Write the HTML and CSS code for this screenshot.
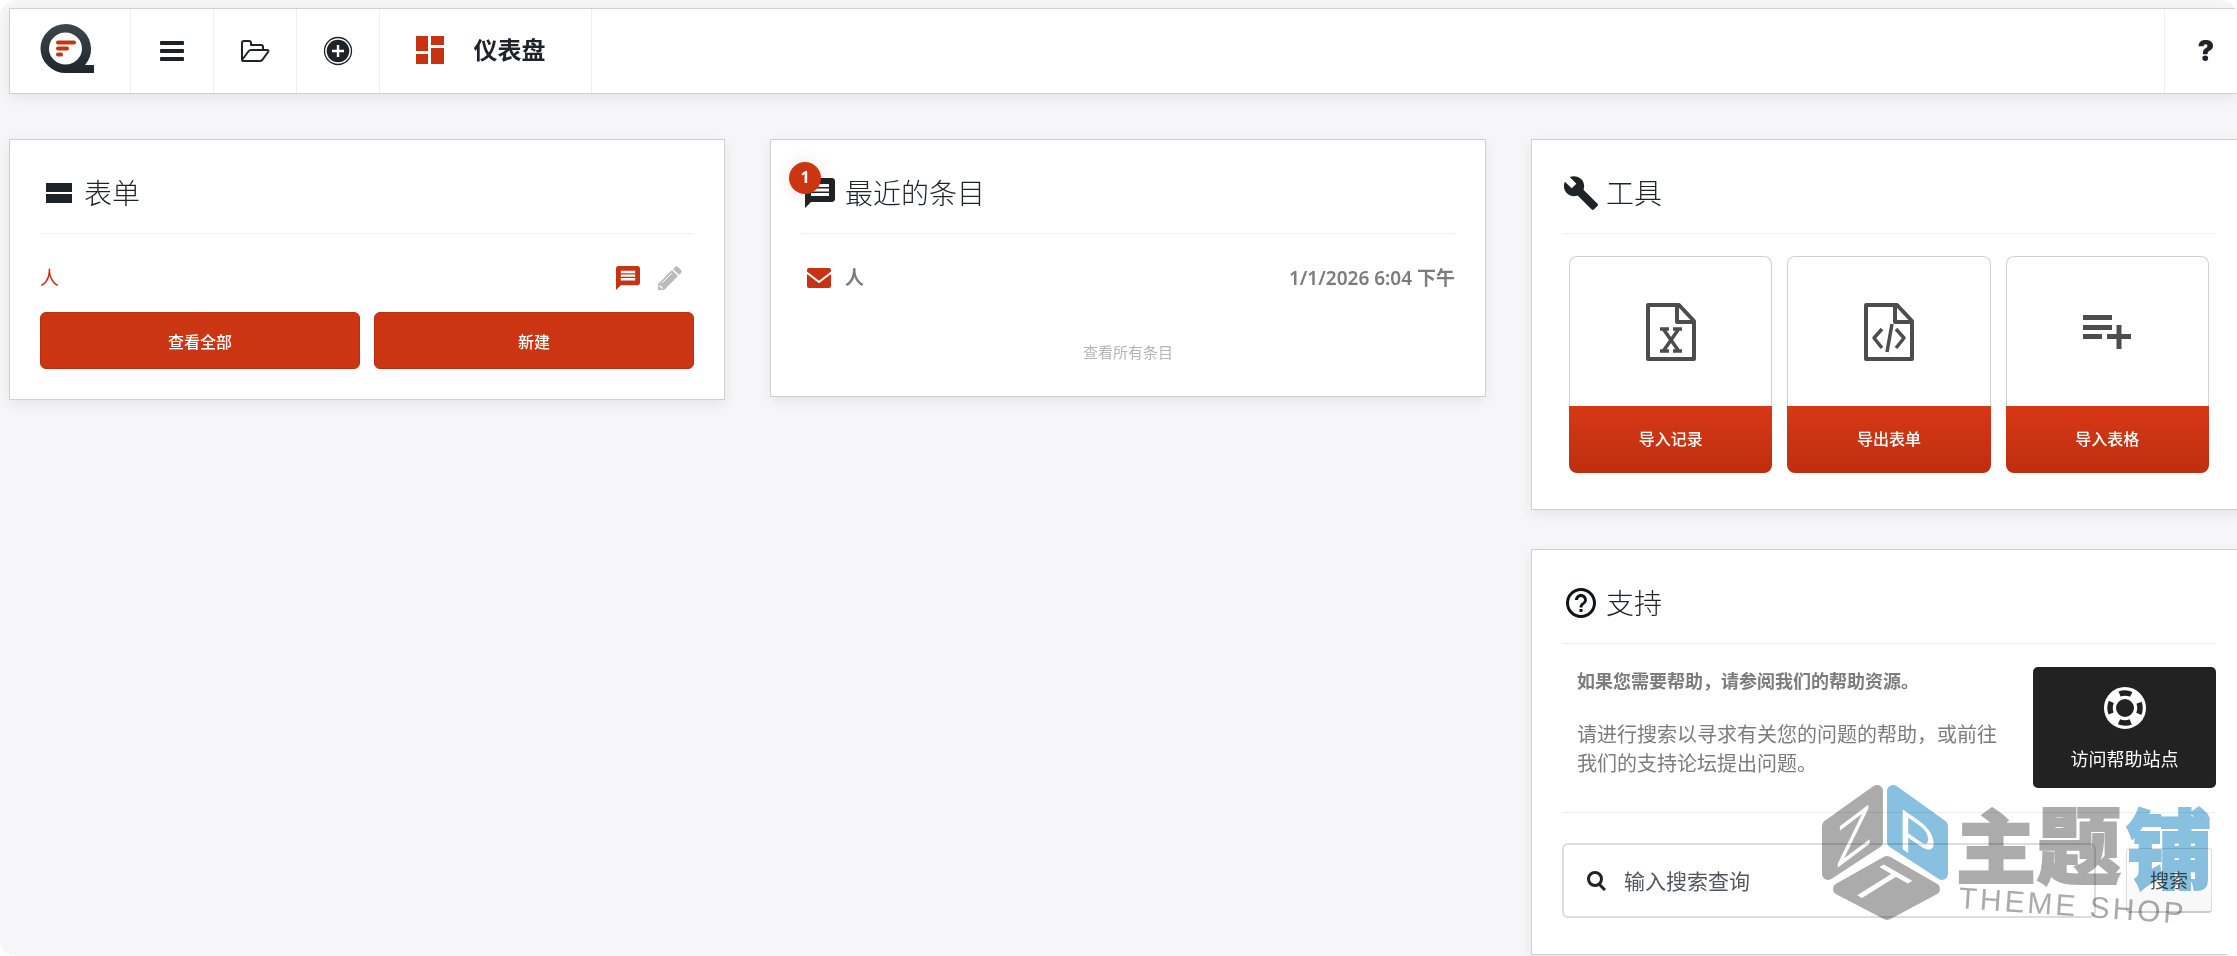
FILE: index.html
```html
<!DOCTYPE html>
<html lang="zh-CN">
<head>
    <meta charset="UTF-8">
    <meta name="viewport" content="width=device-width, initial-scale=1.0">
    <link rel="stylesheet" href="styles.css">
    <title>仪表盘</title>
</head>
<body>
    <header class="topbar">
        <a class="logo" href="#" aria-label="首页">
            <svg width="54" height="49" viewBox="0 0 54 49">
                <defs>
                    <linearGradient id="ring" x1="0" y1="0" x2="0" y2="1">
                        <stop offset="0" stop-color="#3d474d"/>
                        <stop offset="1" stop-color="#1e262b"/>
                    </linearGradient>
                </defs>
                <path fill="url(#ring)" fill-rule="evenodd" d="M26 0a25.500 24.500 0 0 0 0 49h28v-8h-9a24 24 0 0 0 6-17A25.500 24.500 0 0 0 26 0zM25.500 8.500a16.500 16 0 1 1 0 32a16.500 16 0 0 1 0-32z"/>
                <path stroke="#c73312" stroke-width="4" stroke-linecap="round" d="M18 18.500h16M18 24.500h9M18 30.500h3"/>
            </svg>
        </a>
        <button class="nav-button" aria-label="菜单">
            <svg width="24" height="20" viewBox="0 0 24 20" fill="#1d2327">
                <rect width="24" height="4" rx="1"/><rect y="8" width="24" height="4" rx="1"/><rect y="16" width="24" height="4" rx="1"/>
            </svg>
        </button>
        <button class="nav-button" aria-label="打开">
            <svg width="30" height="22" viewBox="0 0 30 22" fill="none" stroke="#1d2327" stroke-width="2" stroke-linejoin="round">
                <path d="M2 20V3q0-2 2-2h5q2 0 2 2v2h10q2 0 2 2v3M2 20l6-8q1-2 3-2h16q2 0 1 2l-5 7q-1 2-3 2H3q-1 0-1-1z"/>
            </svg>
        </button>
        <button class="nav-button" aria-label="新建">
            <svg width="30" height="30" viewBox="0 0 30 30">
                <circle cx="15" cy="15" r="13.500" fill="#fff" stroke="#1d2327" stroke-width="1.300"/>
                <circle cx="15" cy="15" r="11.300" fill="#1d2327"/>
                <path stroke="#fff" stroke-width="2.400" d="M9 15h12M15 9v12"/>
            </svg>
        </button>
        <a class="current" href="#">
            <svg width="28" height="28" viewBox="0 0 28 28" fill="#c73312">
                <path d="M0 0h12v15H0zM15 0h13v9H15zM0 18h12v10H0zM15 12h13v16H15z"/>
            </svg>
            <span>仪表盘</span>
        </a>
        <button class="help">?</button>
    </header>

    <main class="columns">
        <section class="card">
            <h2 class="card-title">
                <svg class="title-icon" viewBox="0 0 30 30" fill="#1d2327"><path d="M2 5h26v9H2zM2 16h26v9H2z"/></svg>
                表单
            </h2>
            <div class="row">
                <a class="form-name" href="#">人</a>
                <a class="row-icon" href="#" aria-label="条目">
                    <svg width="24" height="24" viewBox="2 2 20 20" fill="#c73312"><path d="M20 2H4c-1.100 0-2 .9-2 2v18l4-4h14c1.100 0 2-.9 2-2V4c0-1.100-.9-2-2-2zM18 14H6v-2h12v2zm0-3H6V9h12v2zm0-3H6V6h12v2z"/></svg>
                </a>
                <a class="row-icon" href="#" aria-label="编辑">
                    <svg width="25" height="25" viewBox="0 0 25 25">
                        <path fill="#bbb" d="M1 18L15 4l6 6L7 24H1zM16 3l2-2q1.500-1.500 3 0l3 3q1.500 1.500 0 3l-2 2z"/>
                        <path stroke="#fff" fill="none" d="M5 17L15 7M3 19v2h2v2"/>
                    </svg>
                </a>
            </div>
            <div class="buttons">
                <button class="button">查看全部</button>
                <button class="button">新建</button>
            </div>
        </section>

        <section class="card">
            <h2 class="card-title">
                <svg class="title-icon" viewBox="2 2 20 20" fill="#1d2327"><path d="M20 2H4c-1.100 0-2 .9-2 2v18l4-4h14c1.100 0 2-.9 2-2V4c0-1.100-.9-2-2-2zM18 14H6v-2h12v2zm0-3H6V9h12v2zm0-3H6V6h12v2z"/></svg>
                <span class="badge">1</span>
                最近的条目
            </h2>
            <div class="row entry">
                <svg width="24" height="20" viewBox="0 0 24 20">
                    <rect width="24" height="20" rx="2" fill="#c73312"/>
                    <path fill="none" stroke="#fff" stroke-width="2" d="M-1 4l13 10L25 4"/>
                </svg>
                <span class="entry-name">人</span>
                <span>1/1/2026 6:04 下午</span>
            </div>
            <a class="view-all" href="#">查看所有条目</a>
        </section>

        <div class="stack">
            <section class="card">
                <h2 class="card-title">
                    <svg class="title-icon wrench" viewBox="1 1 22 22" fill="#1d2327"><path d="M22.700 19l-9.100-9.100c.9-2.300.4-5-1.500-6.900-2-2-5-2.400-7.400-1.300L9 6 6 9 1.600 4.700C.4 7.100.9 10.100 2.900 12.100c1.900 1.900 4.600 2.400 6.900 1.500l9.100 9.100c.4.4 1 .4 1.400 0l2.300-2.300c.5-.4.5-1.100.1-1.400z"/></svg>
                    工具
                </h2>
                <div class="tiles">
                    <button class="tile">
                        <span class="tile-picture">
                            <svg width="50" height="58" viewBox="0 0 50 58" fill="none" stroke="#4d4d4d" stroke-width="4" stroke-linejoin="round">
                                <path d="M2 2h31l15 16v38H2zM31 2v17h17"/>
                                <path stroke-width="3.500" d="M14 26h9M27 26h9M14 48h9M27 48h9M18 27l14 20M32 27L18 47"/>
                            </svg>
                        </span>
                        <span class="tile-label">导入记录</span>
                    </button>
                    <button class="tile">
                        <span class="tile-picture">
                            <svg width="50" height="58" viewBox="0 0 50 58" fill="none" stroke="#4d4d4d" stroke-width="4" stroke-linejoin="round">
                                <path d="M2 2h31l15 16v38H2zM31 2v17h17"/>
                                <path stroke-width="3.500" d="M18 26l-8 9 8 10M32 26l8 9-8 10M28 21l-5 28"/>
                            </svg>
                        </span>
                        <span class="tile-label">导出表单</span>
                    </button>
                    <button class="tile">
                        <span class="tile-picture">
                            <svg width="48" height="34" viewBox="0 0 48 34" fill="none" stroke="#4d4d4d" stroke-width="5">
                                <path d="M0 2.500h29M0 12.500h29M0 21.500h19M24 21.500h24M36 10v24"/>
                            </svg>
                        </span>
                        <span class="tile-label">导入表格</span>
                    </button>
                </div>
            </section>

            <section class="card">
                <h2 class="card-title">
                    <svg class="title-icon" viewBox="2 2 20 20" fill="#0f1417"><path d="M11 18h2v-2h-2v2zm1-16C6.480 2 2 6.480 2 12s4.480 10 10 10 10-4.480 10-10S17.520 2 12 2zm0 18c-4.410 0-8-3.590-8-8s3.590-8 8-8 8 3.590 8 8-3.590 8-8 8zm0-14c-2.210 0-4 1.790-4 4h2c0-1.100.9-2 2-2s2 .9 2 2c0 2-3 1.750-3 5h2c0-2.250 3-2.500 3-5 0-2.210-1.790-4-4-4z"/></svg>
                    支持
                </h2>
                <div class="support">
                    <div class="support-text">
                        <h3>如果您需要帮助，请参阅我们的帮助资源。</h3>
                        <p>请进行搜索以寻求有关您的问题的帮助，或前往我们的支持论坛提出问题。</p>
                    </div>
                    <a class="help-site" href="#">
                        <svg width="42" height="42" viewBox="0 0 42 42" fill="none">
                            <circle cx="21" cy="21" r="15" stroke="#fff" stroke-width="12"/>
                            <circle cx="21" cy="21" r="15" stroke="#222" stroke-width="5.500" stroke-dasharray="12 11.562" stroke-dashoffset="6"/>
                        </svg>
                        <span>访问帮助站点</span>
                    </a>
                </div>
                <form class="search">
                    <label class="search-box">
                        <svg width="19" height="20" viewBox="0 0 19 20" fill="none" stroke="#1d2327" stroke-width="3">
                            <circle cx="8" cy="8" r="6.500"/><path d="M12 13l6 6"/>
                        </svg>
                        <input type="text" placeholder="输入搜索查询" aria-label="输入搜索查询">
                    </label>
                    <button class="search-button" type="button">搜索</button>
                </form>
                <svg class="watermark" width="420" height="160" viewBox="0 0 420 160">
                    <g class="grey" stroke-width="12" stroke-linejoin="round">
                        <path d="M28 56L77 21V72L28 104z"/>
                        <path d="M39 119L87 92L134 119L87 144z"/>
                    </g>
                    <path class="blue" stroke-width="12" stroke-linejoin="round" d="M93 21L142 56V104L93 72z"/>
                    <g class="cube-letters">
                        <text x="0" y="0" transform="translate(36 99) skewY(-37)">Z</text>
                        <text x="0" y="0" transform="translate(98 76) skewY(35)">P</text>
                        <text x="-18" y="18" transform="translate(77 116) rotate(30) skewX(-28)">T</text>
                    </g>
                    <g class="shop-name" stroke-width="2">
                        <text class="grey" x="156" y="107" font-size="80">主</text>
                        <text class="grey" x="237" y="107" font-size="84">题</text>
                        <text class="blue" x="326" y="112" font-size="86">铺</text>
                    </g>
                    <text class="shop-latin" x="158" y="138" transform="rotate(4 158 138)">THEME SHOP</text>
                </svg>
            </section>
        </div>
    </main>
</body>
</html>
```
FILE: styles.css
```css
*{
    box-sizing: border-box;
}
html{
    background: #fff;
}
body{
    margin: 0;
    min-height: 100vh;
    padding: 8px 0 0 9px;
    background: #f6f6f8;
    border-radius: 16px;
    overflow: hidden;
    font-family: "Noto Sans", "Noto Sans CJK SC", sans-serif;
    color: #1d2327;
}
button,input{
    font-family: inherit;
}
button{
    cursor: pointer;
}
a{
    color: inherit;
    text-decoration: none;
}
svg{
    display: block;
    flex: none;
}

/* top bar */
.topbar{
    display: flex;
    height: 86px;
    background: #fff;
    border: 1px solid #d0d0d0;
    border-right: 0;
    box-shadow: 0 4px 12px rgba(0,0,0,0.07);
}
.logo,.nav-button,.current,.help{
    display: flex;
    align-items: center;
    justify-content: center;
    border: 0;
    border-right: 1px solid #eee;
    background: none;
    padding: 0;
}
.logo{
    width: 121px;
    padding: 0 6px 6px 0;
}
.nav-button{
    width: 83px;
}
.current{
    width: 212px;
    gap: 30px;
    padding: 0 10px 2px 0;
    font-size: 24px;
    font-weight: 600;
    line-height: 28px;
}
.help{
    width: 73px;
    margin-left: auto;
    padding-left: 10px;
    border-right: 0;
    border-left: 1px solid #eee;
    font-family: Inter, sans-serif;
    font-size: 28px;
    font-weight: 900;
    color: #1d2327;
}

/* cards, the last column runs past the right edge */
.columns{
    display: grid;
    grid-template-columns: repeat(3, 1fr);
    gap: 45px;
    align-items: start;
    margin: 45px -10px 0 0;
}
.stack{
    display: flex;
    flex-direction: column;
    gap: 39px;
}
.card{
    position: relative;
    background: #fff;
    border: 1px solid #d0d0d0;
    padding: 30px;
    box-shadow: 0 4px 12px rgba(0,0,0,0.07);
}
.card-title{
    position: relative;
    display: flex;
    align-items: center;
    gap: 10px;
    margin: 0;
    padding: 0 4px 17px;
    border-bottom: 1px solid #eee;
    font-size: 28px;
    font-weight: 300;
    line-height: 46px;
}
.title-icon{
    width: 30px;
    height: 30px;
}
.wrench{
    width: 34px;
    height: 34px;
    margin: 0 -2px;
}
.badge{
    position: absolute;
    left: -12px;
    top: -8px;
    width: 32px;
    height: 32px;
    border-radius: 50%;
    background: #cc3512;
    box-shadow: 0 0 16px rgba(204,53,18,0.15);
    color: #fff;
    font-size: 16px;
    font-weight: 700;
    line-height: 30px;
    text-align: center;
}
.row{
    display: flex;
    align-items: center;
    gap: 17px;
    margin-top: 30px;
    padding-right: 12px;
    font-size: 19px;
    line-height: 28px;
}
.form-name{
    flex: 1;
    color: #c73312;
}
.buttons{
    display: flex;
    gap: 14px;
    margin-top: 20px;
}
.button{
    flex: 1;
    height: 57px;
    border: 1px solid #b92f10;
    border-radius: 6px;
    background: #cc3512;
    color: #fff;
    font-size: 16px;
    font-weight: 500;
}
.entry{
    gap: 14px;
    padding: 0 0 0 6px;
    color: #7c7c7c;
    font-weight: 600;
}
.entry-name{
    flex: 1;
}
.view-all{
    display: block;
    margin-top: 46px;
    color: #b5b5b5;
    font-size: 15px;
    line-height: 28px;
    text-align: center;
}

/* tools */
.tiles{
    display: flex;
    gap: 15px;
    padding: 22px 7px 6px;
}
.tile{
    flex: 1;
    padding: 0;
    border: 0;
    background: none;
}
.tile-picture{
    display: flex;
    align-items: center;
    justify-content: center;
    height: 150px;
    border: 1px solid #d0d3d3;
    border-bottom: 0;
    border-radius: 8px 8px 0 0;
}
.tile-label{
    display: block;
    border-radius: 0 0 8px 8px;
    background: linear-gradient(#d83815, #bd2f10);
    color: #fff;
    font-size: 16px;
    font-weight: 500;
    line-height: 67px;
}

/* support */
.support{
    display: flex;
    gap: 30px;
    padding: 23px 0 24px 15px;
    border-bottom: 1px solid #eee;
    color: #7c7c7c;
}
.support-text{
    flex: 1;
}
.support h3{
    margin: 0 0 25px;
    font-size: 18px;
    font-weight: 700;
    line-height: 28px;
}
.support p{
    margin: 0;
    font-size: 20px;
    line-height: 29px;
}
.help-site{
    display: flex;
    flex-direction: column;
    align-items: center;
    justify-content: center;
    gap: 16px;
    width: 183px;
    height: 121px;
    padding-top: 4px;
    border-radius: 5px;
    background: #222;
    color: #fff;
    font-size: 18px;
    line-height: 28px;
}
.search{
    display: flex;
    align-items: center;
    gap: 30px;
    padding: 30px 4px 6px 0;
}
.search-box{
    display: flex;
    align-items: center;
    gap: 18px;
    flex: 1;
    height: 75px;
    padding: 0 23px;
    border: 2px solid #ddd;
    border-radius: 6px;
}
.search-box input{
    flex: 1;
    min-width: 0;
    padding: 0;
    border: 0;
    outline: none;
    background: none;
    font-size: 21px;
}
.search-box input::placeholder{
    color: #50575e;
}
.search-button{
    width: 86px;
    height: 65px;
    border: 1px solid #ddd;
    border-bottom: 2px solid #ccc;
    border-radius: 4px;
    background: linear-gradient(#fff, #f7f7f7);
    color: #555;
    font-size: 19px;
}

/* watermark over the search row */
.watermark{
    position: absolute;
    right: 26px;
    bottom: 24px;
    pointer-events: none;
    mix-blend-mode: multiply;
}
.grey{
    fill: #ababab;
    stroke: #ababab;
}
.blue{
    fill: #88c1e0;
    stroke: #88c1e0;
}
.cube-letters{
    fill: #fff;
    font-family: "Liberation Sans", sans-serif;
    font-size: 58px;
}
.shop-name{
    font-family: "Noto Sans CJK SC", sans-serif;
    font-weight: 900;
}
.shop-latin{
    fill: #ababab;
    font-family: "Liberation Sans", sans-serif;
    font-size: 30px;
    letter-spacing: 3px;
}
```
